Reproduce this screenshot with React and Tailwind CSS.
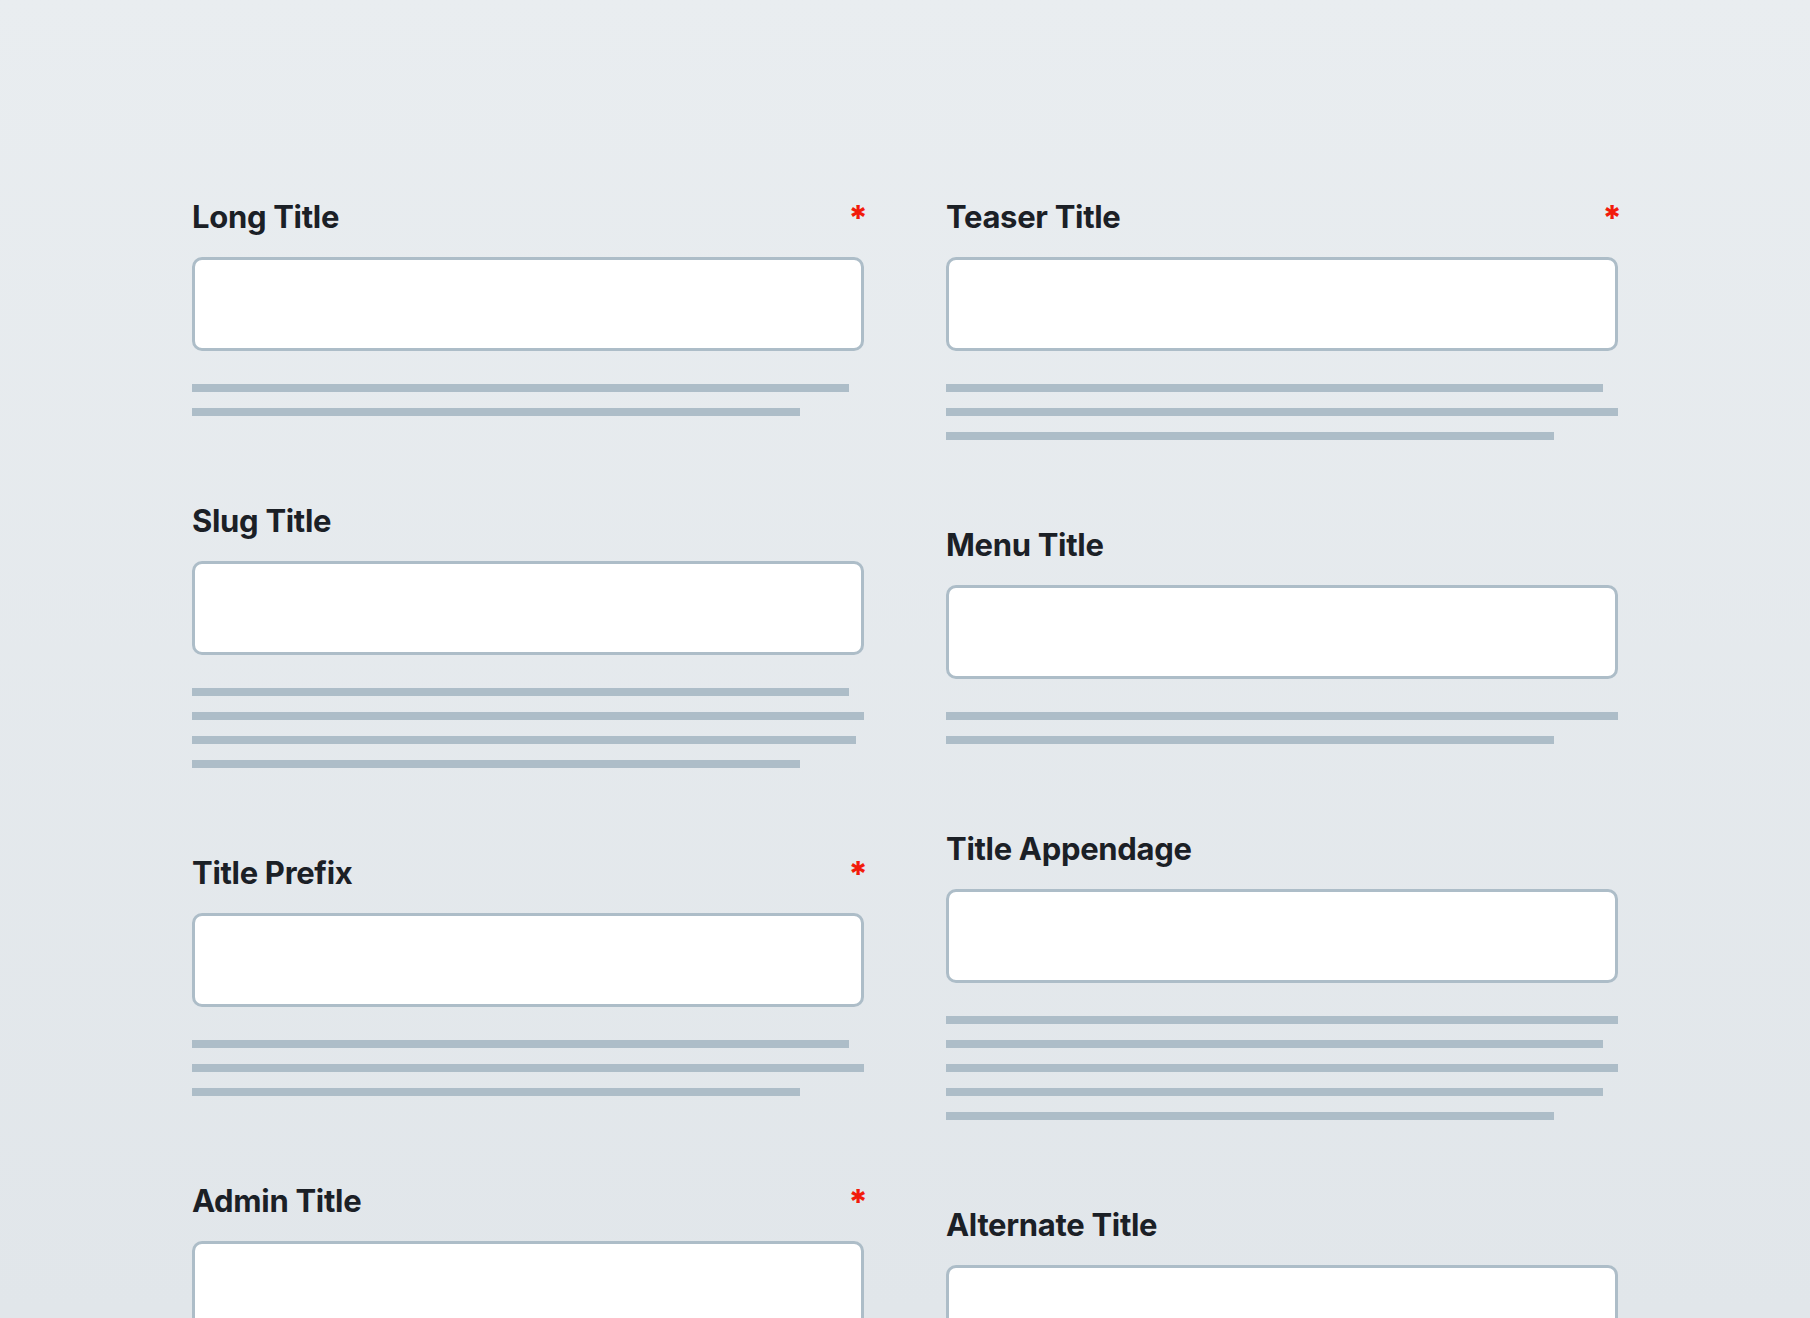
const LINE_W = {
  full: "w-full",
  long: "w-[657px]",
  mid: "w-[664px]",
  short: "w-[608px]",
};

const left = [
  { label: "Long Title", required: true, lines: ["long", "short"] },
  { label: "Slug Title", lines: ["long", "full", "mid", "short"] },
  { label: "Title Prefix", required: true, lines: ["long", "full", "short"] },
  { label: "Admin Title", required: true, lines: ["long", "short"] },
];

const right = [
  { label: "Teaser Title", required: true, lines: ["long", "full", "short"] },
  { label: "Menu Title", lines: ["full", "short"] },
  { label: "Title Appendage", lines: ["full", "long", "full", "long", "short"] },
  { label: "Alternate Title", lines: ["full", "short"] },
];

const Field = ({ label, required, lines }) => {
  return (
    <div className="flex flex-col">
      <div className="flex h-[36px] items-start justify-between">
        <span className="text-[31px] leading-[36px] font-bold tracking-[-0.01em] text-[#1b2026]">
          {label}
        </span>
        {required && (
          <span className="-mr-[4px] mt-[2px] text-[34px] leading-[34px] font-extrabold text-[#f21b0b]">*</span>
        )}
      </div>
      <div className="mt-[22px] h-[94px] rounded-[10px] border-[3.5px] border-[#adbdc8] bg-white" />
      <div className="mt-[33px] flex flex-col gap-4">
        {lines.map((l, i) => (
          <div key={i} className={`h-2 bg-[#adbdc8] ${LINE_W[l]}`} />
        ))}
      </div>
    </div>
  );
};

const Column = ({ fields }) => (
  <div className="flex flex-col gap-[87px]">
    {fields.map((f) => (
      <Field key={f.label} {...f} />
    ))}
  </div>
);

export default function App() {
  return (
    <div
      className="h-screen overflow-hidden bg-linear-to-b from-[#e9edf0] to-[#e1e6ea]"
      style={{ fontFamily: "Inter, 'Noto Sans', sans-serif" }}
    >
      <div className="mx-auto grid w-[1426px] grid-cols-2 gap-x-[82px] pt-[199px]">
        <Column fields={left} />
        <Column fields={right} />
      </div>
    </div>
  );
}
